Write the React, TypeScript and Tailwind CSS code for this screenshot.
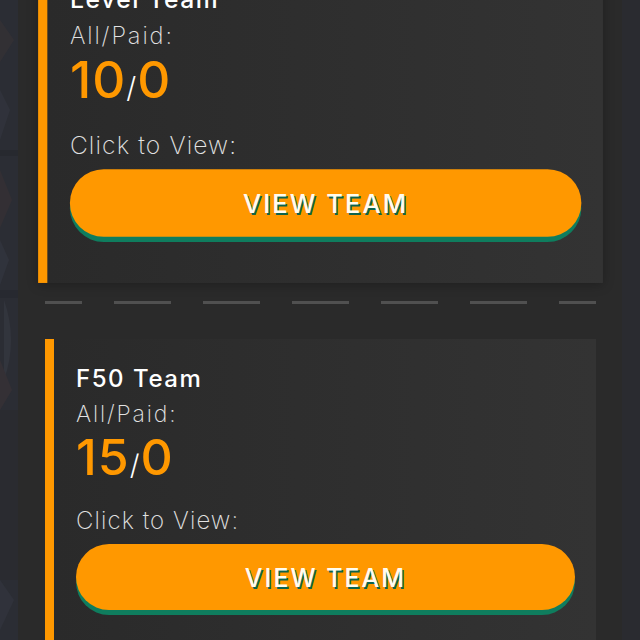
const teams = [
  { name: 'Level Team', all: 10, paid: 0, active: true },
  { name: 'F50 Team', all: 15, paid: 0, active: false },
];

function SideStrip() {
  // faint blurred artwork peeking out on the left edge
  return (
    <div className="w-[18px] shrink-0 overflow-hidden bg-[#2b2d34]">
      <svg width="18" height="640" viewBox="0 0 18 640" className="opacity-50">
        <rect x="0" y="0" width="18" height="640" fill="#2b2d34" />
        <path d="M0 20 L14 40 L0 62 Z" fill="#3a3335" />
        <path d="M0 90 L10 110 L0 140 Z" fill="#353842" />
        <rect x="0" y="150" width="18" height="6" fill="#24262c" />
        <path d="M0 170 L12 200 L0 228 Z" fill="#3b3234" />
        <path d="M0 240 L9 260 L0 285 Z" fill="#363944" />
        <rect x="0" y="290" width="18" height="8" fill="#25272d" />
        <path d="M4 300 Q18 340 4 380 Z" fill="#3a3d46" />
        <path d="M0 360 L12 390 L0 410 Z" fill="#3d3336" />
        <rect x="0" y="410" width="18" height="170" fill="#2a2a2d" />
        <path d="M0 580 L14 600 L0 630 Z" fill="#353842" />
      </svg>
    </div>
  );
}

function TeamCard({ team }: { team: (typeof teams)[number] }) {
  return (
    <div
      className={
        'border-l-[9px] border-[#ff9800] bg-linear-to-r from-[#2a2a2a] to-[#333333] pl-[22px] pr-[21px] pt-[25px] pb-[45px]' +
        (team.active ? ' scale-[1.025] shadow-[0_2px_10px_rgba(0,0,0,0.25)]' : '')
      }
    >
      <h3 className="text-[24px] leading-[30px] font-medium text-white tracking-[0.065em]">{team.name}</h3>
      <p className="mt-[6px] text-[23px] leading-[28px] font-extralight text-[#e2e2e2] tracking-[0.08em]">All/Paid:</p>
      <p className="mt-[3px] text-[50px] leading-[52px] font-medium text-[#ff9800] tracking-[0.02em]">
        {team.all}
        <span className="text-[28px] font-light text-white">/</span>
        {team.paid}
      </p>
      <p className="mt-[15px] text-[24px] leading-[30px] font-extralight text-[#e2e2e2] tracking-[0.045em]">Click to View:</p>
      <button
        type="button"
        className="mt-[8px] block h-[66px] w-full rounded-full bg-[#ff9800] pt-[4px] text-[25px] font-medium tracking-[0.08em] text-[#fffdf0] shadow-[0_5px_0_#0f7d5e] [text-shadow:1.5px_1.5px_0_#0d634b]"
      >
        VIEW TEAM
      </button>
    </div>
  );
}

export default function App() {
  return (
    <div className="flex h-[640px] w-full overflow-hidden bg-[#2a2b30] [font-family:Inter,'Open_Sans',sans-serif]">
      <SideStrip />
      <div className="flex-1 bg-[#2a2a2a] pl-[27px] pr-[26px]">
        <div className="-mt-[37px]">
          <TeamCard team={teams[0]} />
          <div className="mt-[22px] mb-[35px] h-[3px] bg-[repeating-linear-gradient(90deg,#505050_0_37px,transparent_37px_69px,#505050_69px_89px)]" />
          <TeamCard team={teams[1]} />
        </div>
      </div>
      <div className="w-[18px] shrink-0 bg-[#2a2b30]" />
    </div>
  );
}
